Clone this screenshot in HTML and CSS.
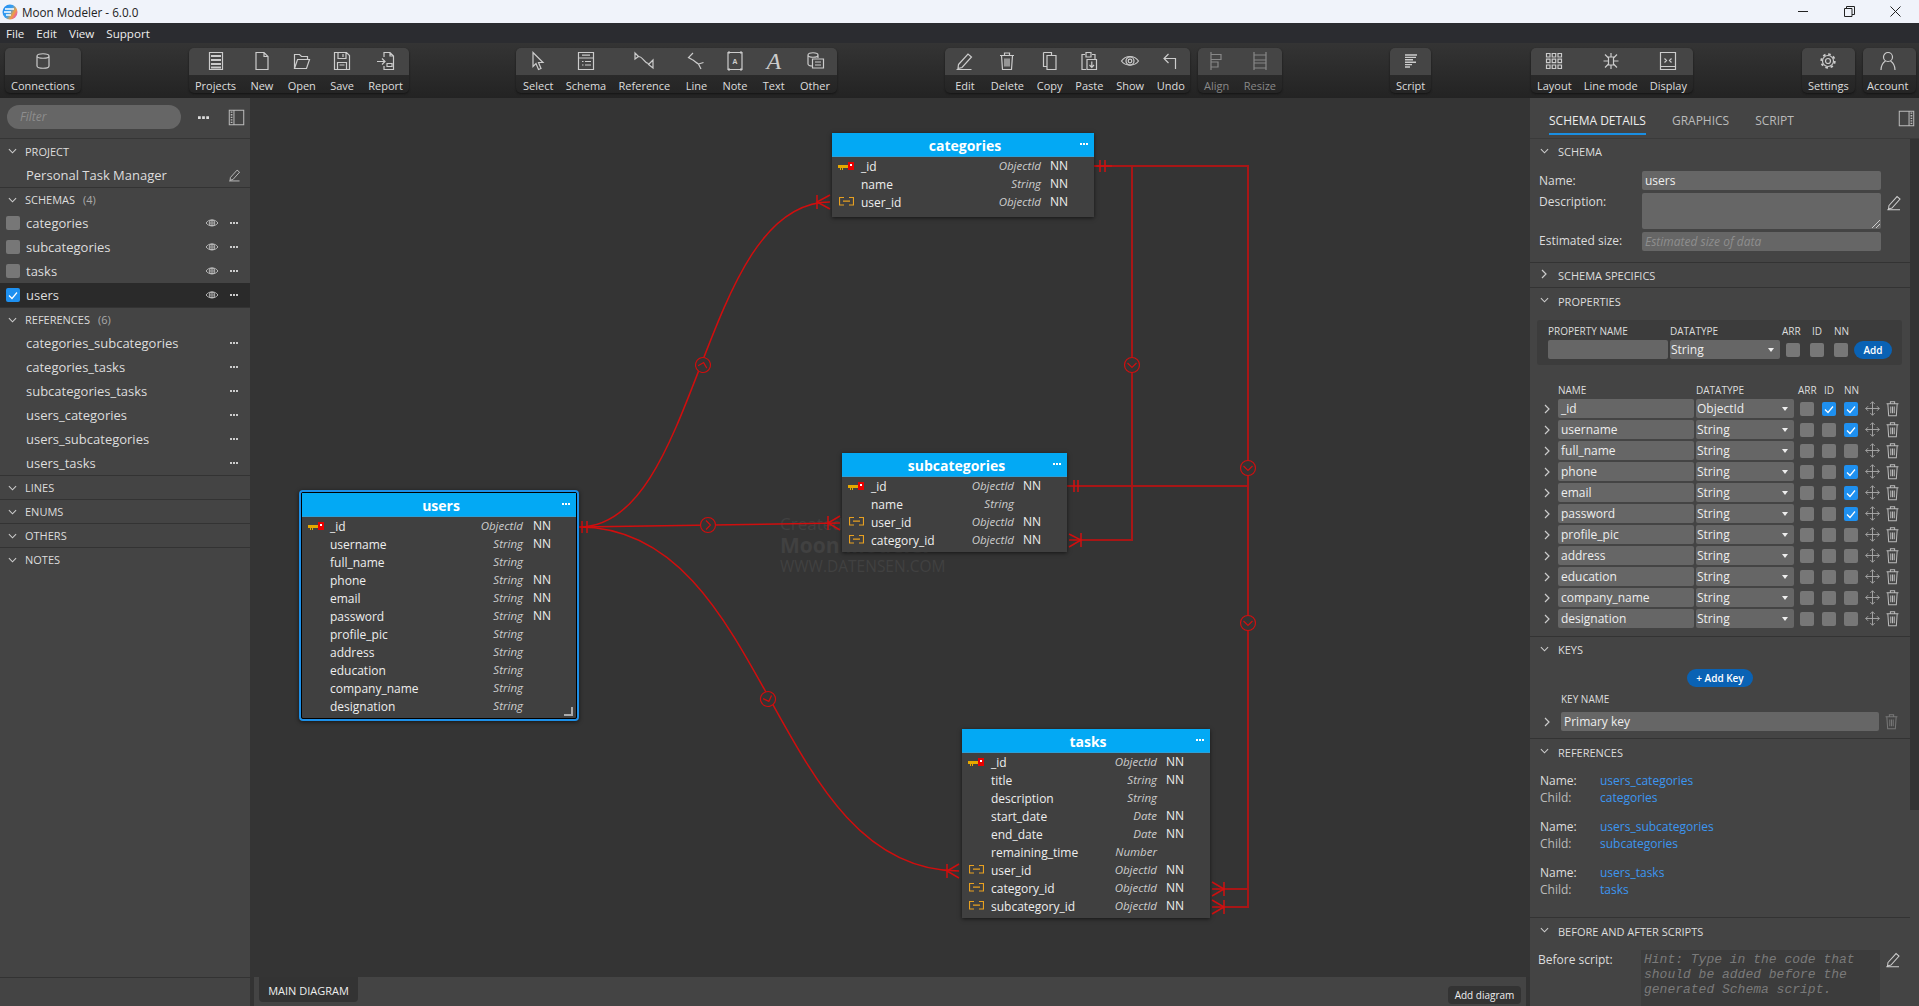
FILE: index.html
```html
<!DOCTYPE html>
<html>
<head>
  <meta charset="UTF-8">
  <title>Moon Modeler - 6.0.0</title>
  <link rel="stylesheet" href="styles.css">
</head>
<body>
  <svg class="sprite" width="0" height="0">
    <defs>
      <linearGradient id="logo-grad" x1="0" y1="0" x2="1" y2="0.6">
        <stop offset="0" stop-color="#1e88f0"/><stop offset="0.55" stop-color="#3aa0f0"/><stop offset="0.8" stop-color="#f0a040"/><stop offset="1" stop-color="#e860a0"/>
      </linearGradient>
    </defs>
    <symbol id="i-conn" viewBox="0 0 20 20"><path d="M4 5c0-3 12-3 12 0v10c0 3-12 3-12 0zM4 5c0 3 12 3 12 0"/></symbol>
    <symbol id="i-projects" viewBox="0 0 20 20"><path d="M3.500 1.500h13v17h-13z"/><path class="thick" d="M5 5h10M5 9h10M5 13h10M5 16.500h10"/></symbol>
    <symbol id="i-new" viewBox="0 0 20 20"><path d="M4 1.500h8l4 4v13H4zM12 1.500v4h4"/></symbol>
    <symbol id="i-open" viewBox="0 0 20 20"><path d="M2.500 17.500v-14h5l2 2h6v3M2.500 17.500l3-9h12l-3 9z"/></symbol>
    <symbol id="i-save" viewBox="0 0 20 20"><path d="M2.500 1.500h12l3 3v14h-15zM6 1.500v6h8v-6M11 3v3M5.500 18.500v-7h9v7M7.500 14h5"/></symbol>
    <symbol id="i-report" viewBox="0 0 20 20"><path d="M8 6V1.500h6l3.500 3.500v13.500H8V15M14 1.500V5h3.500M1 10.500h8M6 7.500l3 3-3 3M11 12.500h5v3h-5z"/></symbol>
    <symbol id="i-select" viewBox="0 0 20 20"><path d="M5 1.500v14l3-3 2.500 6 2.500-1-2.500-6h4.500z"/></symbol>
    <symbol id="i-schema" viewBox="0 0 20 20"><path d="M2.500 1.500h15v17h-15zM2.500 7h15M6 4.200h8M6 10.500h1.500M9 10.500h6M6 14h1.500M9 14h6"/></symbol>
    <symbol id="i-ref" viewBox="0 0 20 20"><path d="M1 2v6l3.500-2.500zM4.500 5.500c4.500 0 6 7 10 7M19 9v8l-4.500-3.500z"/></symbol>
    <symbol id="i-line" viewBox="0 0 20 20"><path d="M7 2L2.500 6.500 6 8.500c2 1 4 3 6.500 4.500M17.500 11.500l-5 1.500 2.500 5"/></symbol>
    <symbol id="i-note" viewBox="0 0 20 20"><path d="M3 1.500h14v17H3z"/><path class="thick" d="M3 1.500h2M15 1.500h2M3 18.500h2M15 18.500h2"/></symbol>
    <symbol id="i-other" viewBox="0 0 20 20"><path d="M3 4c0-3 10-3 10 0v3M3 4c0 3 10 3 10 0M3 4v9c0 1 2 2 4 2M7.500 8h11v9h-11zM10 11h6M10 14h6"/></symbol>
    <symbol id="i-edit" viewBox="0 0 20 20"><path d="M3.500 13.500L13 3l3.500 3-9.500 10.500-4 1zM1.500 18.500h15"/></symbol>
    <symbol id="i-trash" viewBox="0 0 20 20"><path d="M3 4.500h14M7.500 4.500V2h5v2.500M4.500 4.500l1 14h9l1-14M8 7.500v8M10 7.500v8M12 7.500v8"/></symbol>
    <symbol id="i-copy" viewBox="0 0 20 20"><path d="M3.500 1.500h8v3M3.500 1.500v14h3M7 4.500h9v14H7z"/></symbol>
    <symbol id="i-paste" viewBox="0 0 20 20"><path d="M6 3.500H3v15h4M13 3.500h3V8M7 1.500h5V6H7zM8 8.500h9.500v10H8zM12.800 10.500v5.500M10.500 14l2.300 2.300L15 14"/></symbol>
    <symbol id="i-eye" viewBox="0 0 20 20"><path d="M1.500 10c4-6 13-6 17 0-4 5.500-13 5.500-17 0z"/><circle cx="10" cy="10" r="4"/><circle cx="10" cy="10" r="1.800"/></symbol>
    <symbol id="i-undo" viewBox="0 0 20 20"><path d="M7.500 3L3 7.500 7.500 12M3 7.500h11.500V18"/></symbol>
    <symbol id="i-align" viewBox="0 0 20 20"><path d="M4 1v18M4 3.500h10v5H4M4 11h7v5H4"/></symbol>
    <symbol id="i-resize" viewBox="0 0 20 20"><path d="M4 1v18M16 1v18M4 4h12v5H4M4 12h12v5H4"/></symbol>
    <symbol id="i-script" viewBox="0 0 20 20"><path class="fine" d="M4 4h12M4 6.400h11M4 8.800h8M4 11.200h11M4 13.600h7M4 16h5"/></symbol>
    <symbol id="i-layout" viewBox="0 0 20 20"><path d="M2.500 2.500h3.500v3.500H2.500zM8.200 2.500h3.500v3.500H8.200zM14 2.500h3.500v3.500H14zM2.500 8.200h3.500v3.500H2.500zM8.200 8.200h3.500v3.500H8.200zM14 8.200h3.500v3.500H14zM2.500 14h3.500v3.500H2.500zM8.200 14h3.500v3.500H8.200zM14 14h3.500v3.500H14z"/></symbol>
    <symbol id="i-linemode" viewBox="0 0 20 20"><path d="M7.500 6h5v8h-5zM10 2v4M10 14v4M4 3.500l3.500 3.500M16 3.500L12.500 7M4 16.500L7.500 13M16 16.500L12.500 13M2.500 10h5M12.500 10h5"/></symbol>
    <symbol id="i-display" viewBox="0 0 20 20"><path d="M2.500 1.500h15v17h-15zM2.500 15.500h15M6.500 7.500l2 2-2 2M13.500 7.500l-2 2 2 2"/></symbol>
    <symbol id="i-settings" viewBox="0 0 20 20"><circle cx="10" cy="10" r="2.500"/><circle cx="10" cy="10" r="5.500"/><circle class="teeth" cx="10" cy="10" r="6.800"/></symbol>
    <symbol id="i-account" viewBox="0 0 20 20"><circle cx="10" cy="6" r="4.500"/><path d="M3 19c0-6 3-8 4.500-9M17 19c0-6-3-8-4.500-9"/></symbol>
    <symbol id="i-panel-l" viewBox="0 0 20 20"><path d="M1.500 1.500h17v17h-17zM7 1.500v17"/><path class="dash" d="M4.200 3v14"/></symbol>
    <symbol id="i-panel-r" viewBox="0 0 20 20"><path d="M1.500 1.500h17v17h-17zM13 1.500v17"/><path class="dash" d="M15.800 3v14"/></symbol>
    <symbol id="i-move" viewBox="0 0 20 20"><path d="M10 1v18M1 10h18M7 4l3-3 3 3M7 16l3 3 3-3M4 7l-3 3 3 3M16 7l3 3-3 3"/></symbol>
    <symbol id="i-chev-d" viewBox="0 0 10 6"><path d="M1 1l4 4 4-4"/></symbol>
    <symbol id="i-chev-r" viewBox="0 0 6 10"><path d="M1 1l4 4-4 4"/></symbol>
    <symbol id="i-check" viewBox="0 0 14 14"><path d="M3 7.500l3 3 5-6"/></symbol>
    <symbol id="i-dots" viewBox="0 0 8 2"><path class="solid" d="M0 0h2v2H0zM3 0h2v2H3zM6 0h2v2H6z"/></symbol>
    <symbol id="i-pk" viewBox="0 0 16 9"><path class="gold" d="M0 3h10v3H5v2H4V6H3v2H2V6H0z"/><path class="red" d="M10 0h6v8h-6z"/><path class="white" d="M12 2h2v2h-2z"/></symbol>
    <symbol id="i-fk" viewBox="0 0 15 9"><path d="M5 .500H.500v7.500H5M10 .500h4.500v7.500H10M4 4.200h7"/></symbol>
  </svg>

  <div class="titlebar">
    <svg class="logo" viewBox="0 0 16 16" width="16" height="16">
      <circle cx="8" cy="8" r="7.500"/>
      <path d="M3 5h9M2 8h7M4 11h5"/>
    </svg>
    <span class="app-title">Moon Modeler - 6.0.0</span>
    <div class="win-btns">
      <svg width="11" height="11" viewBox="0 0 11 11"><path d="M0 5.500h10"/></svg>
      <svg width="11" height="11" viewBox="0 0 11 11"><path d="M.500 2.500h7.500v8H.500zM2.500 2.500V.500h8v8H8"/></svg>
      <svg width="11" height="11" viewBox="0 0 11 11"><path d="M.500 .500l10 10M10.500 .500l-10 10"/></svg>
    </div>
  </div>

  <div class="menubar"><span>File</span><span>Edit</span><span>View</span><span>Support</span></div>

  <div class="toolbar">
    <div class="tb-group g-conn">
      <div class="tb-item"><svg class="ico"><use href="#i-conn"/></svg><span>Connections</span></div>
    </div>
    <div class="tb-group g-file">
      <div class="tb-item"><svg class="ico"><use href="#i-projects"/></svg><span>Projects</span></div>
      <div class="tb-item"><svg class="ico"><use href="#i-new"/></svg><span>New</span></div>
      <div class="tb-item"><svg class="ico"><use href="#i-open"/></svg><span>Open</span></div>
      <div class="tb-item"><svg class="ico"><use href="#i-save"/></svg><span>Save</span></div>
      <div class="tb-item"><svg class="ico"><use href="#i-report"/></svg><span>Report</span></div>
    </div>
    <div class="tb-group g-add">
      <div class="tb-item tight"><svg class="ico"><use href="#i-select"/></svg><span>Select</span></div>
      <div class="tb-item tight"><svg class="ico"><use href="#i-schema"/></svg><span>Schema</span></div>
      <div class="tb-item"><svg class="ico"><use href="#i-ref"/></svg><span>Reference</span></div>
      <div class="tb-item"><svg class="ico"><use href="#i-line"/></svg><span>Line</span></div>
      <div class="tb-item"><div class="note-ico"><svg class="ico"><use href="#i-note"/></svg><b class="note-a">A</b></div><span>Note</span></div>
      <div class="tb-item"><span class="ico-a">A</span><span>Text</span></div>
      <div class="tb-item"><svg class="ico"><use href="#i-other"/></svg><span>Other</span></div>
    </div>
    <div class="tb-group g-edit">
      <div class="tb-item wide"><svg class="ico"><use href="#i-edit"/></svg><span>Edit</span></div>
      <div class="tb-item"><svg class="ico"><use href="#i-trash"/></svg><span>Delete</span></div>
      <div class="tb-item"><svg class="ico"><use href="#i-copy"/></svg><span>Copy</span></div>
      <div class="tb-item"><svg class="ico"><use href="#i-paste"/></svg><span>Paste</span></div>
      <div class="tb-item"><svg class="ico"><use href="#i-eye"/></svg><span>Show</span></div>
      <div class="tb-item"><svg class="ico"><use href="#i-undo"/></svg><span>Undo</span></div>
    </div>
    <div class="tb-group g-align">
      <div class="tb-item dim"><svg class="ico"><use href="#i-align"/></svg><span>Align</span></div>
      <div class="tb-item dim"><svg class="ico"><use href="#i-resize"/></svg><span>Resize</span></div>
    </div>
    <div class="tb-group g-script">
      <div class="tb-item"><svg class="ico"><use href="#i-script"/></svg><span>Script</span></div>
    </div>
    <div class="tb-group g-view">
      <div class="tb-item"><svg class="ico"><use href="#i-layout"/></svg><span>Layout</span></div>
      <div class="tb-item"><svg class="ico"><use href="#i-linemode"/></svg><span>Line mode</span></div>
      <div class="tb-item"><svg class="ico"><use href="#i-display"/></svg><span>Display</span></div>
    </div>
    <div class="tb-group g-settings">
      <div class="tb-item"><svg class="ico"><use href="#i-settings"/></svg><span>Settings</span></div>
    </div>
    <div class="tb-group g-account">
      <div class="tb-item"><svg class="ico"><use href="#i-account"/></svg><span>Account</span></div>
    </div>
  </div>

  <div class="main">
    <aside class="sidebar">
      <div class="filter-row">
        <div class="filter">Filter</div>
        <svg class="filter-dots"><use href="#i-dots"/></svg>
        <svg class="panel-ico"><use href="#i-panel-l"/></svg>
      </div>
      <div class="side-list">
        <div class="side-head"><svg class="chev-d"><use href="#i-chev-d"/></svg>PROJECT</div>
        <div class="side-row"><span class="side-name">Personal Task Manager</span><svg class="row-edit"><use href="#i-edit"/></svg></div>

        <div class="side-head"><svg class="chev-d"><use href="#i-chev-d"/></svg>SCHEMAS <em>(4)</em></div>
        <div class="side-row"><i class="cb left-cb"></i><span class="side-name">categories</span><svg class="row-eye"><use href="#i-eye"/></svg><svg class="row-dots"><use href="#i-dots"/></svg></div>
        <div class="side-row"><i class="cb left-cb"></i><span class="side-name">subcategories</span><svg class="row-eye"><use href="#i-eye"/></svg><svg class="row-dots"><use href="#i-dots"/></svg></div>
        <div class="side-row"><i class="cb left-cb"></i><span class="side-name">tasks</span><svg class="row-eye"><use href="#i-eye"/></svg><svg class="row-dots"><use href="#i-dots"/></svg></div>
        <div class="side-row selected"><i class="cb left-cb on"><svg><use href="#i-check"/></svg></i><span class="side-name">users</span><svg class="row-eye"><use href="#i-eye"/></svg><svg class="row-dots"><use href="#i-dots"/></svg></div>

        <div class="side-head"><svg class="chev-d"><use href="#i-chev-d"/></svg>REFERENCES <em>(6)</em></div>
        <div class="side-row"><span class="side-name">categories_subcategories</span><svg class="row-dots"><use href="#i-dots"/></svg></div>
        <div class="side-row"><span class="side-name">categories_tasks</span><svg class="row-dots"><use href="#i-dots"/></svg></div>
        <div class="side-row"><span class="side-name">subcategories_tasks</span><svg class="row-dots"><use href="#i-dots"/></svg></div>
        <div class="side-row"><span class="side-name">users_categories</span><svg class="row-dots"><use href="#i-dots"/></svg></div>
        <div class="side-row"><span class="side-name">users_subcategories</span><svg class="row-dots"><use href="#i-dots"/></svg></div>
        <div class="side-row"><span class="side-name">users_tasks</span><svg class="row-dots"><use href="#i-dots"/></svg></div>

        <div class="side-head lined"><svg class="chev-d"><use href="#i-chev-d"/></svg>LINES</div>
        <div class="side-head lined"><svg class="chev-d"><use href="#i-chev-d"/></svg>ENUMS</div>
        <div class="side-head lined"><svg class="chev-d"><use href="#i-chev-d"/></svg>OTHERS</div>
        <div class="side-head lined"><svg class="chev-d"><use href="#i-chev-d"/></svg>NOTES</div>
      </div>
      <div class="side-foot"></div>
    </aside>

    <section class="center">
      <div class="canvas">
        <div class="watermark">
          <div class="wm-1">Created with</div>
          <div class="wm-2">Moon Modeler</div>
          <div class="wm-3">WWW.DATENSEN.COM</div>
        </div>

        <svg class="lines" viewBox="250 98 1280 879" width="1280" height="879">
          <defs>
            <g id="mark"><circle r="7.500"/><path d="M-4.500 -2L0 2.500L4.500 -2"/></g>
          </defs>
          <g class="rel-dark">
            <path d="M1094 166H1248V889H1212"/>
            <path d="M1067 486H1248V907H1212"/>
            <path d="M1094 166H1132V540H1069"/>
          </g>
          <g class="rel-mark">
            <path d="M1094 166H1112"/>
            <path d="M1100 160v12M1105 160v12M1074 480v12M1078 480v12"/>
            <path d="M1081 533v14M1069 534L1081 540L1069 547"/>
            <path d="M1224 882v14M1212 882L1224 889L1212 896"/>
            <path d="M1224 900v14M1212 900L1224 907L1212 914"/>
            <use href="#mark" transform="translate(1132 365)"/>
            <use href="#mark" transform="translate(1248 468)"/>
            <use href="#mark" transform="translate(1248 623)"/>
          </g>
          <g class="rel-bright">
            <path d="M579 527C700 527 700 202 830 202"/>
            <path d="M579 527L840 523"/>
            <path d="M579 527C770 527 770 871 959 871"/>
            <path d="M582 521v12M587 521v12"/>
            <path d="M817 195v14M830 195L817 202L830 209"/>
            <path d="M828 516v14M840 516L828 523L840 530"/>
            <path d="M947 864v14M959 864L947 871L959 878"/>
            <use href="#mark" transform="translate(703 365) rotate(195)"/>
            <use href="#mark" transform="translate(708 525) rotate(-90)"/>
            <use href="#mark" transform="translate(768 699) rotate(-20)"/>
          </g>
        </svg>

        <div class="tbl tbl-categories">
          <div class="tbl-head">categories<svg class="tbl-dots"><use href="#i-dots"/></svg></div>
          <div class="tbl-row"><svg class="pk"><use href="#i-pk"/></svg><span class="t-name">_id</span><span class="t-type">ObjectId</span><span class="t-nn">NN</span></div>
          <div class="tbl-row"><span class="t-name">name</span><span class="t-type">String</span><span class="t-nn">NN</span></div>
          <div class="tbl-row"><svg class="fk"><use href="#i-fk"/></svg><span class="t-name">user_id</span><span class="t-type">ObjectId</span><span class="t-nn">NN</span></div>
        </div>

        <div class="tbl tbl-subcategories">
          <div class="tbl-head">subcategories<svg class="tbl-dots"><use href="#i-dots"/></svg></div>
          <div class="tbl-row"><svg class="pk"><use href="#i-pk"/></svg><span class="t-name">_id</span><span class="t-type">ObjectId</span><span class="t-nn">NN</span></div>
          <div class="tbl-row"><span class="t-name">name</span><span class="t-type">String</span><span class="t-nn"></span></div>
          <div class="tbl-row"><svg class="fk"><use href="#i-fk"/></svg><span class="t-name">user_id</span><span class="t-type">ObjectId</span><span class="t-nn">NN</span></div>
          <div class="tbl-row"><svg class="fk"><use href="#i-fk"/></svg><span class="t-name">category_id</span><span class="t-type">ObjectId</span><span class="t-nn">NN</span></div>
        </div>

        <div class="tbl tbl-tasks">
          <div class="tbl-head">tasks<svg class="tbl-dots"><use href="#i-dots"/></svg></div>
          <div class="tbl-row"><svg class="pk"><use href="#i-pk"/></svg><span class="t-name">_id</span><span class="t-type">ObjectId</span><span class="t-nn">NN</span></div>
          <div class="tbl-row"><span class="t-name">title</span><span class="t-type">String</span><span class="t-nn">NN</span></div>
          <div class="tbl-row"><span class="t-name">description</span><span class="t-type">String</span><span class="t-nn"></span></div>
          <div class="tbl-row"><span class="t-name">start_date</span><span class="t-type">Date</span><span class="t-nn">NN</span></div>
          <div class="tbl-row"><span class="t-name">end_date</span><span class="t-type">Date</span><span class="t-nn">NN</span></div>
          <div class="tbl-row"><span class="t-name">remaining_time</span><span class="t-type">Number</span><span class="t-nn"></span></div>
          <div class="tbl-row"><svg class="fk"><use href="#i-fk"/></svg><span class="t-name">user_id</span><span class="t-type">ObjectId</span><span class="t-nn">NN</span></div>
          <div class="tbl-row"><svg class="fk"><use href="#i-fk"/></svg><span class="t-name">category_id</span><span class="t-type">ObjectId</span><span class="t-nn">NN</span></div>
          <div class="tbl-row"><svg class="fk"><use href="#i-fk"/></svg><span class="t-name">subcategory_id</span><span class="t-type">ObjectId</span><span class="t-nn">NN</span></div>
        </div>

        <div class="tbl tbl-users">
          <div class="tbl-head">users<svg class="tbl-dots"><use href="#i-dots"/></svg></div>
          <div class="tbl-row"><svg class="pk"><use href="#i-pk"/></svg><span class="t-name">_id</span><span class="t-type">ObjectId</span><span class="t-nn">NN</span></div>
          <div class="tbl-row"><span class="t-name">username</span><span class="t-type">String</span><span class="t-nn">NN</span></div>
          <div class="tbl-row"><span class="t-name">full_name</span><span class="t-type">String</span><span class="t-nn"></span></div>
          <div class="tbl-row"><span class="t-name">phone</span><span class="t-type">String</span><span class="t-nn">NN</span></div>
          <div class="tbl-row"><span class="t-name">email</span><span class="t-type">String</span><span class="t-nn">NN</span></div>
          <div class="tbl-row"><span class="t-name">password</span><span class="t-type">String</span><span class="t-nn">NN</span></div>
          <div class="tbl-row"><span class="t-name">profile_pic</span><span class="t-type">String</span><span class="t-nn"></span></div>
          <div class="tbl-row"><span class="t-name">address</span><span class="t-type">String</span><span class="t-nn"></span></div>
          <div class="tbl-row"><span class="t-name">education</span><span class="t-type">String</span><span class="t-nn"></span></div>
          <div class="tbl-row"><span class="t-name">company_name</span><span class="t-type">String</span><span class="t-nn"></span></div>
          <div class="tbl-row"><span class="t-name">designation</span><span class="t-type">String</span><span class="t-nn"></span></div>
          <i class="resize-grip"></i>
        </div>
      </div>

      <div class="diagram-bar">
        <div class="diagram-tab">MAIN DIAGRAM</div>
        <div class="add-diagram">Add diagram</div>
      </div>
    </section>

    <aside class="details">
      <div class="tabs">
        <span class="tab active">SCHEMA DETAILS</span>
        <span class="tab">GRAPHICS</span>
        <span class="tab">SCRIPT</span>
        <svg class="panel-ico"><use href="#i-panel-r"/></svg>
      </div>
      <div class="details-body">
        <div class="details-scroll">
          <div class="sec sec-schema">
            <div class="sec-head"><svg class="chev-d"><use href="#i-chev-d"/></svg>SCHEMA</div>
            <div class="form-row"><label>Name:</label><div class="inp w-form">users</div></div>
            <div class="form-row"><label class="up">Description:</label><div class="inp w-form area"><i class="area-grip"></i></div><svg class="form-edit"><use href="#i-edit"/></svg></div>
            <div class="form-row"><label class="up">Estimated size:</label><div class="inp w-form hint">Estimated size of data</div></div>
          </div>

          <div class="sec">
            <div class="sec-head"><svg class="chev-r"><use href="#i-chev-r"/></svg>SCHEMA SPECIFICS</div>
          </div>

          <div class="sec sec-props">
            <div class="sec-head tall"><svg class="chev-d"><use href="#i-chev-d"/></svg>PROPERTIES</div>
            <div class="add-box">
              <div class="col-labels">
                <span class="a-name">PROPERTY NAME</span><span class="a-type">DATATYPE</span><span class="a-arr">ARR</span><span class="a-id">ID</span><span>NN</span>
              </div>
              <div class="add-row">
                <div class="inp a-input"></div>
                <div class="inp sel a-sel">String</div>
                <i class="cb a-cb1"></i><i class="cb a-cb2"></i><i class="cb a-cb2"></i>
                <div class="btn btn-add">Add</div>
              </div>
            </div>
            <div class="col-labels prop-labels">
              <span class="p-l-name">NAME</span><span class="p-l-type">DATATYPE</span><span class="p-l-arr">ARR</span><span class="p-l-id">ID</span><span>NN</span>
            </div>
            <div class="prop-row"><svg class="chev-r"><use href="#i-chev-r"/></svg><div class="inp p-name">_id</div><div class="inp sel p-type">ObjectId</div><i class="cb p-cb"></i><i class="cb p-cb2 on"><svg><use href="#i-check"/></svg></i><i class="cb p-cb2 on"><svg><use href="#i-check"/></svg></i><svg class="p-move"><use href="#i-move"/></svg><svg class="p-trash"><use href="#i-trash"/></svg></div>
            <div class="prop-row"><svg class="chev-r"><use href="#i-chev-r"/></svg><div class="inp p-name">username</div><div class="inp sel p-type">String</div><i class="cb p-cb"></i><i class="cb p-cb2"></i><i class="cb p-cb2 on"><svg><use href="#i-check"/></svg></i><svg class="p-move"><use href="#i-move"/></svg><svg class="p-trash"><use href="#i-trash"/></svg></div>
            <div class="prop-row"><svg class="chev-r"><use href="#i-chev-r"/></svg><div class="inp p-name">full_name</div><div class="inp sel p-type">String</div><i class="cb p-cb"></i><i class="cb p-cb2"></i><i class="cb p-cb2"></i><svg class="p-move"><use href="#i-move"/></svg><svg class="p-trash"><use href="#i-trash"/></svg></div>
            <div class="prop-row"><svg class="chev-r"><use href="#i-chev-r"/></svg><div class="inp p-name">phone</div><div class="inp sel p-type">String</div><i class="cb p-cb"></i><i class="cb p-cb2"></i><i class="cb p-cb2 on"><svg><use href="#i-check"/></svg></i><svg class="p-move"><use href="#i-move"/></svg><svg class="p-trash"><use href="#i-trash"/></svg></div>
            <div class="prop-row"><svg class="chev-r"><use href="#i-chev-r"/></svg><div class="inp p-name">email</div><div class="inp sel p-type">String</div><i class="cb p-cb"></i><i class="cb p-cb2"></i><i class="cb p-cb2 on"><svg><use href="#i-check"/></svg></i><svg class="p-move"><use href="#i-move"/></svg><svg class="p-trash"><use href="#i-trash"/></svg></div>
            <div class="prop-row"><svg class="chev-r"><use href="#i-chev-r"/></svg><div class="inp p-name">password</div><div class="inp sel p-type">String</div><i class="cb p-cb"></i><i class="cb p-cb2"></i><i class="cb p-cb2 on"><svg><use href="#i-check"/></svg></i><svg class="p-move"><use href="#i-move"/></svg><svg class="p-trash"><use href="#i-trash"/></svg></div>
            <div class="prop-row"><svg class="chev-r"><use href="#i-chev-r"/></svg><div class="inp p-name">profile_pic</div><div class="inp sel p-type">String</div><i class="cb p-cb"></i><i class="cb p-cb2"></i><i class="cb p-cb2"></i><svg class="p-move"><use href="#i-move"/></svg><svg class="p-trash"><use href="#i-trash"/></svg></div>
            <div class="prop-row"><svg class="chev-r"><use href="#i-chev-r"/></svg><div class="inp p-name">address</div><div class="inp sel p-type">String</div><i class="cb p-cb"></i><i class="cb p-cb2"></i><i class="cb p-cb2"></i><svg class="p-move"><use href="#i-move"/></svg><svg class="p-trash"><use href="#i-trash"/></svg></div>
            <div class="prop-row"><svg class="chev-r"><use href="#i-chev-r"/></svg><div class="inp p-name">education</div><div class="inp sel p-type">String</div><i class="cb p-cb"></i><i class="cb p-cb2"></i><i class="cb p-cb2"></i><svg class="p-move"><use href="#i-move"/></svg><svg class="p-trash"><use href="#i-trash"/></svg></div>
            <div class="prop-row"><svg class="chev-r"><use href="#i-chev-r"/></svg><div class="inp p-name">company_name</div><div class="inp sel p-type">String</div><i class="cb p-cb"></i><i class="cb p-cb2"></i><i class="cb p-cb2"></i><svg class="p-move"><use href="#i-move"/></svg><svg class="p-trash"><use href="#i-trash"/></svg></div>
            <div class="prop-row"><svg class="chev-r"><use href="#i-chev-r"/></svg><div class="inp p-name">designation</div><div class="inp sel p-type">String</div><i class="cb p-cb"></i><i class="cb p-cb2"></i><i class="cb p-cb2"></i><svg class="p-move"><use href="#i-move"/></svg><svg class="p-trash"><use href="#i-trash"/></svg></div>
          </div>

          <div class="sec sec-keys">
            <div class="sec-head keys-head"><svg class="chev-d"><use href="#i-chev-d"/></svg>KEYS</div>
            <div class="btn btn-key">+ Add Key</div>
            <div class="col-labels key-label">KEY NAME</div>
            <div class="prop-row"><svg class="chev-r"><use href="#i-chev-r"/></svg><div class="inp key-name">Primary key</div><svg class="p-trash key-trash"><use href="#i-trash"/></svg></div>
          </div>

          <div class="sec sec-refs">
            <div class="sec-head tall"><svg class="chev-d"><use href="#i-chev-d"/></svg>REFERENCES</div>
            <div class="ref-group">
              <div class="ref-line"><span class="ref-k bright">Name:</span><span class="ref-v">users_categories</span></div>
              <div class="ref-line"><span class="ref-k">Child:</span><span class="ref-v">categories</span></div>
            </div>
            <div class="ref-group">
              <div class="ref-line"><span class="ref-k bright">Name:</span><span class="ref-v">users_subcategories</span></div>
              <div class="ref-line"><span class="ref-k">Child:</span><span class="ref-v">subcategories</span></div>
            </div>
            <div class="ref-group">
              <div class="ref-line"><span class="ref-k bright">Name:</span><span class="ref-v">users_tasks</span></div>
              <div class="ref-line"><span class="ref-k">Child:</span><span class="ref-v">tasks</span></div>
            </div>
          </div>

          <div class="sec sec-last">
            <div class="sec-head tall"><svg class="chev-d"><use href="#i-chev-d"/></svg>BEFORE AND AFTER SCRIPTS</div>
            <div class="script-row">
              <label>Before script:</label>
              <div class="code-hint">Hint: Type in the code that should be added before the generated Schema script.</div>
              <svg class="form-edit"><use href="#i-edit"/></svg>
            </div>
          </div>
        </div>
        <div class="scrollbar"><div class="scroll-thumb"></div></div>
      </div>
    </aside>
  </div>
</body>
</html>
```
FILE: styles.css
```css
* { box-sizing: border-box; }
html, body { margin: 0; height: 100%; overflow: hidden; }
body { display: flex; flex-direction: column; font-family: "Open Sans", "Noto Sans", sans-serif; font-size: 12px; color: #eee; background: #333; }
svg { display: block; }
svg path, svg circle { fill: none; stroke: currentColor; stroke-width: 1.2; }
.sprite { position: absolute; }
svg .thick { stroke-width: 2; }
svg .dash { stroke-width: 2; stroke-dasharray: 1.5 1.5; }
svg .teeth { stroke-width: 1.800; stroke-dasharray: 2.600 2.740; }
svg .solid { fill: currentColor; stroke: none; }
svg .gold { fill: #e6a800; stroke: none; }
svg .red { fill: #e80000; stroke: none; }
svg .white { fill: #fff; stroke: none; }

/* window chrome */
.titlebar { height: 23px; flex: none; display: flex; align-items: center; background: #f0f3fa; color: #222; }
.logo { margin-left: 2px; }
svg.logo circle { fill: url(#logo-grad); stroke: none; }
svg.logo path { stroke: #fff; stroke-width: 1.300; }
.app-title { margin-left: 4px; font-size: 11.700px; }
.win-btns { margin-left: auto; display: flex; gap: 35px; margin-right: 18px; }
.win-btns svg path { stroke-width: 1; }
.menubar { height: 20px; flex: none; display: flex; align-items: center; gap: 12px; padding-left: 6px; background: #2b2c30; font-size: 11.600px; }

/* toolbar */
.toolbar { height: 55px; flex: none; display: flex; padding: 5px 0 0 5px; background: linear-gradient(#343434, #232323); }
.tb-group { height: 45px; display: flex; justify-content: space-between; padding: 0 6px; border-radius: 5px; background: linear-gradient(#454545 27px, transparent 27px); box-shadow: 0 1px 2px #151515; }
.tb-item { display: flex; flex-direction: column; align-items: center; font-size: 11px; color: #ddd; white-space: nowrap; }
.tb-item > span:last-child { height: 18px; line-height: 22px; }
.tb-item.dim { color: #888; }
.tb-item.tight { margin-right: -3px; }
.tb-item.wide { margin-right: 3px; }
.ico { width: 20px; height: 20px; margin: 3px 0 4px; color: #ccc; }
.ico path, .ico circle { stroke-width: 1; }
svg .fine { stroke-width: 1.400; }
.dim .ico { color: #888; }
.ico-a { height: 27px; font: italic 24px/27px "Liberation Serif", serif; color: #ccc; }
.note-ico { position: relative; }
.note-a { position: absolute; left: 0; right: 0; top: 9px; text-align: center; font-size: 7px; line-height: 9px; color: #ccc; }
.g-conn { width: 76px; padding: 0 6px; }
.g-file { width: 220px; margin-left: 108px; }
.g-add { width: 321px; margin-left: 107px; padding: 0 7px; }
.g-edit { width: 245px; margin-left: 108px; padding: 0 5px 0 10px; }
.g-align { width: 84px; margin-left: 8px; }
.g-script { width: 41px; margin-left: 108px; }
.g-view { width: 162px; margin-left: 100px; }
.g-settings { width: 53px; margin-left: 109px; }
.g-account { width: 53px; margin-left: 8px; padding: 0 4px; }

.main { flex: 1; min-height: 0; display: flex; }

/* left sidebar */
.sidebar { width: 250px; flex: none; display: flex; flex-direction: column; background: #444; }
.filter-row { height: 41px; flex: none; display: flex; align-items: center; padding: 0 0 2px 7px; border-bottom: 1px solid #353535; }
.filter { width: 174px; height: 24px; line-height: 24px; padding-left: 13px; border-radius: 12px; background: #666; color: #8d8d8d; font-style: italic; }
.filter-dots { width: 11px; height: 3px; margin-left: 17px; color: #ddd; }
.panel-ico { width: 17px; height: 17px; color: #bbb; }
.filter-row .panel-ico { margin-left: 19px; }
.side-list { flex: 1; }
.side-head { height: 24px; display: flex; align-items: center; padding-left: 25px; position: relative; font-size: 11px; color: #ddd; }
.side-head.lined { border-top: 1px solid #333; }
.side-head em { font-style: normal; color: #aaa; margin-left: 8px; }
.side-list .side-row + .side-head { border-top: 1px solid #333; }
.chev-d { width: 9px; height: 6px; position: absolute; left: 8px; top: 9px; color: #ccc; }
.side-row { height: 24px; display: flex; align-items: center; padding-left: 26px; position: relative; font-size: 13px; color: #ddd; }
.side-row.selected { background: #2a2a2a; }
.side-name { flex: 1; }
.cb { display: block; width: 14px; height: 14px; flex: none; border-radius: 2px; background: #777; }
.cb.on { background: #1e90f0; }
.cb svg { width: 14px; height: 14px; color: #fff; }
.cb svg path { stroke-width: 1.700; }
.left-cb { position: absolute; left: 6px; top: 5px; }
.row-edit { width: 14px; height: 14px; margin-right: 8px; color: #ccc; }
.row-eye { width: 14px; height: 14px; margin-right: 11px; color: #ccc; }
.row-eye path, .row-eye circle { stroke-width: 1.600; }
.row-dots { width: 8px; height: 2px; margin-right: 12px; color: #ccc; }
.side-foot { height: 29px; flex: none; border-top: 1px solid #333; }

/* canvas */
.center { flex: 1; min-width: 0; display: flex; flex-direction: column; }
.canvas { flex: 1; position: relative; background: #343434; }
.lines { position: absolute; left: 0; top: 0; }
.lines circle { fill: #343434; }
.rel-dark { color: #a81616; }
.rel-dark path { stroke-width: 2; }
.rel-mark { color: #d01010; }
.rel-mark path, .rel-mark circle { stroke-width: 1.500; }
.rel-bright { color: #d00e0e; }
.rel-bright path, .rel-bright circle { stroke-width: 1.500; }
.watermark { position: absolute; left: 530px; top: 416px; color: #414141; white-space: nowrap; }
.wm-1 { font-size: 17px; line-height: 20px; }
.wm-2 { font-size: 21px; font-weight: 700; line-height: 22px; }
.wm-3 { font-size: 15.500px; line-height: 20px; }

.tbl { position: absolute; background: #404040; box-shadow: 0 1px 4px rgba(0, 0, 0, .6); }
.tbl-head { height: 24px; position: relative; padding-left: 4px; text-align: center; background: #03a9f4; border-bottom: 1px solid #2ba0d8; font-size: 14px; font-weight: 700; line-height: 25px; color: #fff; }
.tbl-dots { width: 8px; height: 2px; position: absolute; right: 6px; top: 10px; color: #fff; }
.tbl-row { height: 18px; display: flex; align-items: center; padding-left: 29px; position: relative; }
.t-name { flex: 1; }
.t-type { font-size: 11.500px; font-style: italic; color: #ccc; line-height: 16px; margin-bottom: 1px; }
.t-nn { width: 44px; margin-left: 9px; margin-bottom: 1px; }
.pk { width: 16px; height: 9px; position: absolute; left: 6px; top: 5px; }
.fk { width: 15px; height: 9px; position: absolute; left: 7px; top: 4px; color: #e8a020; }
.tbl-categories { left: 582px; top: 35px; width: 262px; height: 84px; }
.tbl-subcategories { left: 592px; top: 355px; width: 225px; height: 99px; }
.tbl-tasks { left: 712px; top: 631px; width: 248px; height: 189px; }
.tbl-users { left: 49px; top: 392px; width: 280px; height: 231px; border: 2px solid #1e90e8; border-radius: 4px; outline: 1px solid #000; outline-offset: -3px; padding: 1px; }
.tbl-users .tbl-row { padding-left: 28px; }
.tbl-users .t-nn { margin-left: 10px; width: 43px; }
.resize-grip { position: absolute; right: 4px; bottom: 3px; width: 9px; height: 9px; border-right: 2px solid #aaa; border-bottom: 2px solid #aaa; }

.diagram-bar { height: 29px; flex: none; display: flex; background: #444; border-left: 4px solid #333; border-right: 4px solid #333; }
.diagram-tab { width: 99px; height: 25px; margin-left: 5px; line-height: 27px; text-align: center; background: #333; border-radius: 0 0 4px 4px; font-size: 11px; }
.add-diagram { width: 73px; height: 18px; margin: 9px 5px 0 auto; line-height: 18px; text-align: center; background: #333; border-radius: 4px; font-size: 10px; }

/* right panel */
.details { width: 389px; flex: none; display: flex; flex-direction: column; background: #444; }
.tabs { height: 41px; flex: none; display: flex; padding-left: 19px; position: relative; border-bottom: 1px solid #3a3a3a; }
.tab { height: 37px; margin-right: 26px; line-height: 46px; font-size: 12px; color: #bbb; }
.tab.active { color: #eee; border-bottom: 2px solid #1a8fe3; }
.tabs .panel-ico { position: absolute; right: 4px; top: 12px; }
.details-body { flex: 1; min-height: 0; display: flex; }
.details-scroll { flex: 1; min-width: 0; overflow: hidden; }
.scrollbar { width: 9px; flex: none; display: flex; flex-direction: column; background: #333; }
.scroll-thumb { height: 196px; margin-top: auto; background: #444; }

.sec { border-bottom: 1px solid #333; }
.sec-head { height: 24px; padding-left: 28px; position: relative; display: flex; align-items: center; font-size: 11px; color: #ddd; }
.sec-head.tall { height: 25px; padding-top: 1px; }
.sec-head.keys-head { height: 25px; }
.sec-head .chev-d { left: 10px; top: 9px; }
.chev-r { width: 6px; height: 10px; flex: none; color: #ccc; }
.sec-head .chev-r { position: absolute; left: 11px; top: 6px; }
.sec-last { border-bottom: 0; }

.sec-schema { height: 124px; }
.form-row { display: flex; margin-top: 3px; position: relative; }
.sec-schema .sec-head + .form-row { margin-top: 8px; }
.form-row label { width: 112px; padding: 0 0 0 9px; font-size: 12px; color: #ddd; line-height: 19px; }
.form-row label.up { line-height: 17px; }
.inp { height: 19px; line-height: 20px; padding: 0 3px; border-radius: 2px; background: #666; color: #eee; font-size: 12px; white-space: nowrap; overflow: hidden; }
.w-form { width: 239px; }
.area { height: 36px; position: relative; }
.area-grip { position: absolute; right: 1px; bottom: 1px; width: 8px; height: 8px; background: linear-gradient(135deg, transparent 45%, #ccc 45%, #ccc 55%, transparent 55%, transparent 70%, #ccc 70%, #ccc 80%, transparent 80%); }
.hint { color: #8e8e8e; font-style: italic; }
.form-edit { width: 17px; height: 17px; margin: 1px 0 0 5px; color: #ccc; }

.sec-props { padding-bottom: 8px; }
.add-box { margin: 7px 8px 0 7px; padding: 5px 0 6px 11px; height: 45px; border-radius: 3px; background: #3c3c3c; }
.col-labels { height: 12px; display: flex; line-height: 12px; font-size: 10px; color: #ddd; }
.a-name { width: 122px; }
.a-type { width: 112px; }
.a-arr { width: 30px; }
.a-id { width: 22px; }
.add-row { display: flex; align-items: center; margin-top: 3px; }
.a-input { width: 120px; }
.sel { position: relative; padding-left: 1px; }
.sel::after { content: ""; position: absolute; right: 6px; top: 8px; border: 3px solid transparent; border-top: 4px solid #eee; border-bottom: 0; }
.a-sel { width: 110px; margin-left: 2px; }
.a-cb1 { margin-left: 6px; }
.a-cb2 { margin-left: 10px; }
.btn { border-radius: 9px; background: #0a62b4; color: #fff; text-align: center; font-size: 10px; font-weight: 600; height: 18px; line-height: 18px; }
.btn-add { width: 38px; margin-left: 6px; }
.prop-labels { margin: 19px 0 3px 28px; }
.p-l-name { width: 138px; }
.p-l-type { width: 102px; }
.p-l-arr { width: 26px; }
.p-l-id { width: 20px; }
.prop-row { height: 19px; display: flex; align-items: center; margin-bottom: 2px; }
.prop-row:last-child { margin-bottom: 0; }
.prop-row .chev-r { margin: 0 8px 0 14px; }
.p-name { width: 136px; }
.p-type { width: 98px; margin-left: 2px; }
.p-cb { margin-left: 6px; }
.p-cb2 { margin-left: 8px; }
.p-move { width: 15px; height: 15px; margin-left: 7px; color: #aaa; }
.p-trash { width: 17px; height: 17px; margin-left: 4px; color: #bbb; }

.sec-keys { padding-bottom: 7px; }
.btn-key { width: 66px; margin: 7px 0 0 157px; font-size: 10px; }
.key-label { margin: 6px 0 7px 31px; }
.key-name { width: 318px; margin-left: 3px; }
.key-trash { margin-left: 4px; color: #777; }
.sec-refs { padding-bottom: 19px; }
.ref-group { margin-bottom: 12px; }
.ref-group:last-child { margin-bottom: 0; }
.sec-refs .sec-head + .ref-group { margin-top: 8px; }
.ref-line { height: 17px; display: flex; line-height: 17px; padding-left: 10px; font-size: 12px; }
.ref-k { width: 60px; color: #bbb; }
.ref-k.bright { color: #ddd; }
.ref-v { color: #3c96f0; }
.script-row { display: flex; margin-top: 7px; }
.script-row label { width: 111px; padding: 1px 0 0 8px; color: #ddd; line-height: 17px; }
.code-hint { width: 239px; height: 60px; padding: 2px 3px; background: #3c3c3c; font: italic 13px/15px "Liberation Mono", monospace; color: #7a7a7a; }
```
